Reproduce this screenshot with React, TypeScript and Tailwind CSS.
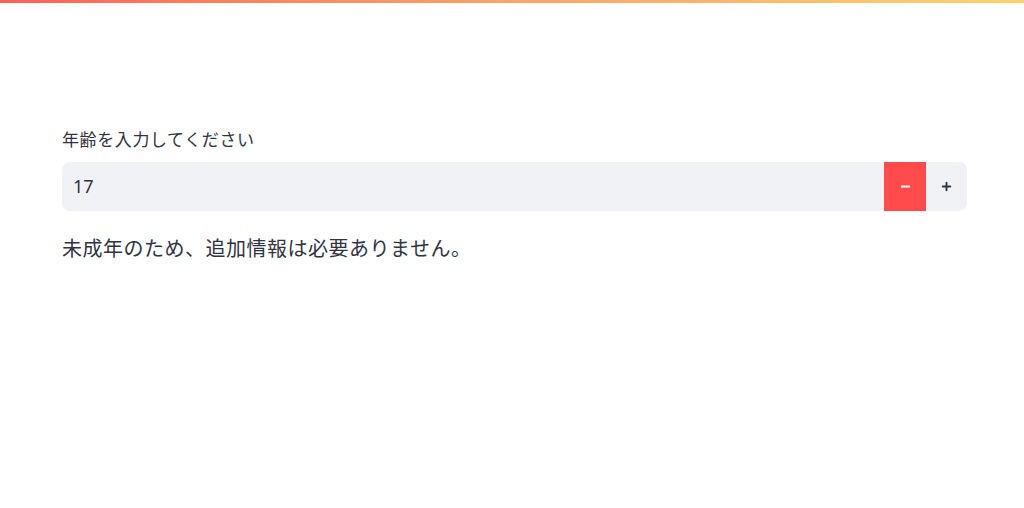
import { Minus, Plus } from 'lucide-react'

export default function App() {
  return (
    <div
      className="min-h-[508px] bg-white text-[#31333f]"
      style={{ fontFamily: '"Noto Sans", "Noto Sans CJK JP", sans-serif' }}
    >
      <div className="h-[3px] bg-gradient-to-r from-[#ff5f55] via-[#f9a46a] to-[#ffd16a]" />
      <main className="ml-[62px] w-[905px] pt-[125px]">
        <label className="block text-[17px] leading-[24px] tracking-[0.6px]">年齢を入力してください</label>
        <div className="mt-[10px] flex h-[49px] items-stretch overflow-hidden rounded-lg bg-[#f0f2f6]">
          <div className="flex flex-1 items-center pl-[11px] text-[18px]">17</div>
          <button className="flex w-[42px] items-center justify-center bg-[#ff4b4b] text-white">
            <Minus size={13} strokeWidth={3.5} />
          </button>
          <button className="flex w-[41px] items-center justify-center text-[#31333f]">
            <Plus size={13} strokeWidth={3.5} />
          </button>
        </div>
        <p className="mt-[23px] text-[20px] leading-[30px] tracking-[0.5px]">未成年のため、追加情報は必要ありません。</p>
      </main>
    </div>
  )
}
